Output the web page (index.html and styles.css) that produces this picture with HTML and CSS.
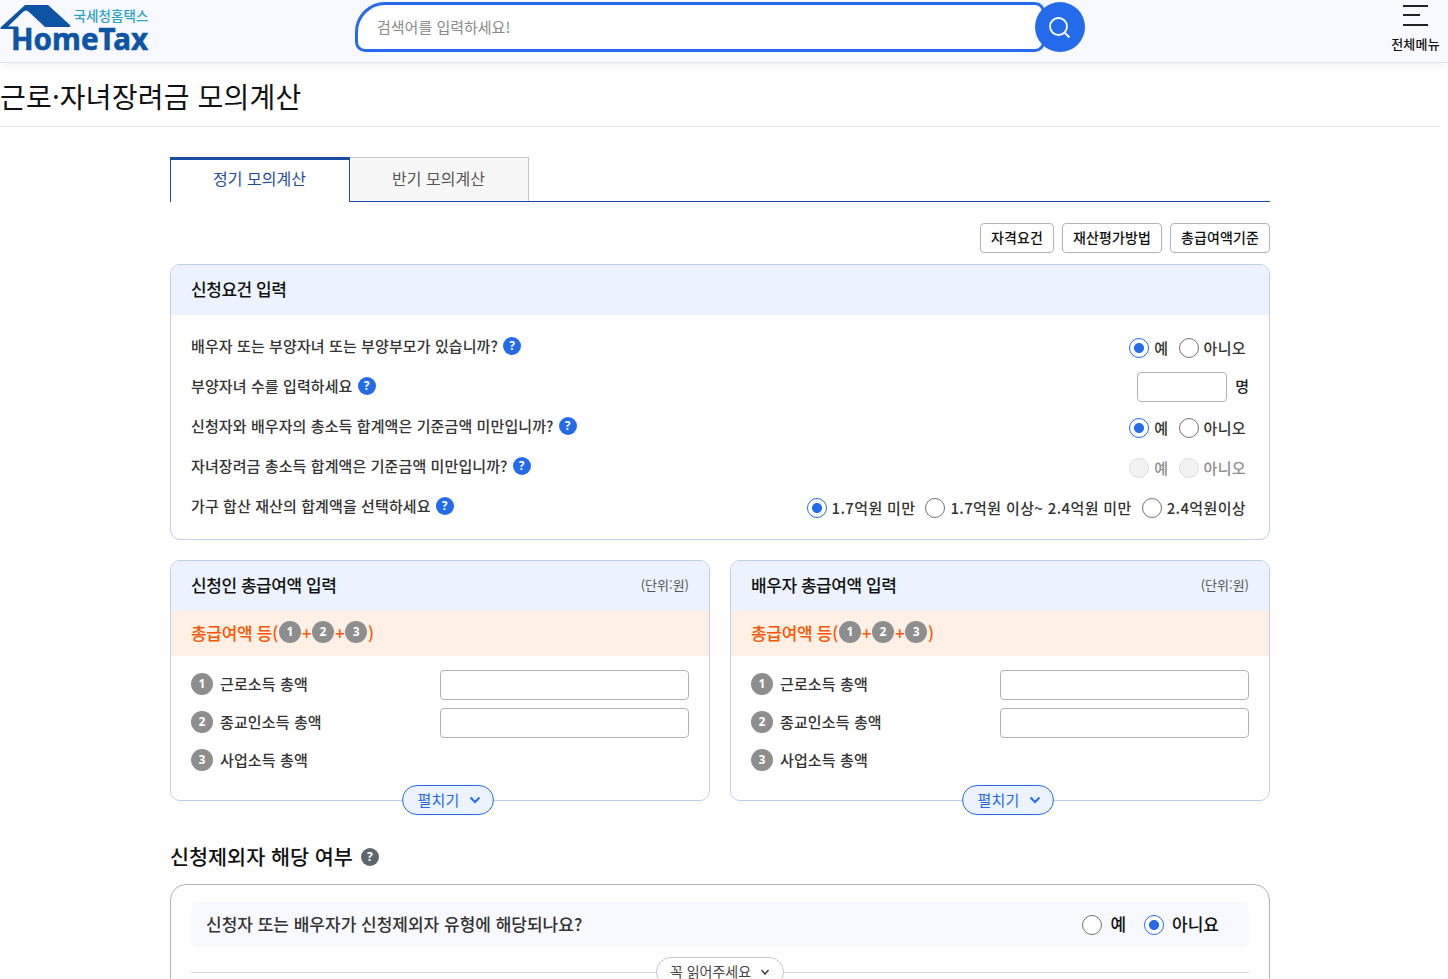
FILE: index.html
```html
<!DOCTYPE html>
<html lang="ko">
<head>
	<meta charset="UTF-8">
	<title>근로·자녀장려금 모의계산</title>
	<link rel="stylesheet" href="styles.css">
</head>
<body>
<header class="header">
	<a class="logo" href="#">
		<svg width="150" height="60" viewBox="0 0 150 60">
			<path d="M25 5H48L70 25Q71 27 69 27H45L29 12Q26 9 23 12L8 26.500H18V29H2Q-1 29 1 27Z" fill="#0d54a5"/>
			<text class="logo-ko" x="73.500" y="20.500" textLength="75">국세청홈택스</text>
			<text class="logo-en" x="11" y="50" textLength="137" lengthAdjust="spacingAndGlyphs">HomeTax</text>
		</svg>
	</a>
	<form class="search">
		<input class="search-input" type="text" placeholder="검색어를 입력하세요!">
		<button class="search-btn" type="button">
			<svg width="24" height="24" viewBox="0 0 24 24" fill="none" stroke="#fff" stroke-width="1.8"><circle cx="10.500" cy="10.500" r="8.500"/><path d="M16.500 16.500L21.500 21.500"/></svg>
		</button>
	</form>
	<a class="all-menu" href="#">
		<svg width="25" height="22" viewBox="0 0 25 22" fill="none" stroke="#222" stroke-width="2"><path d="M0 1H25M0 10H17M0 20H25"/></svg>
		<span>전체메뉴</span>
	</a>
</header>

<h1 class="page-title">근로·자녀장려금 모의계산</h1>

<main class="content">
	<ul class="tabs">
		<li class="tab on">정기 모의계산</li>
		<li class="tab">반기 모의계산</li>
	</ul>

	<div class="guide">
		<button type="button">자격요건</button>
		<button type="button">재산평가방법</button>
		<button type="button">총급여액기준</button>
	</div>

	<section class="card">
		<div class="card-head"><h2>신청요건 입력</h2></div>
		<ul class="questions">
			<li>
				<span class="q">배우자 또는 부양자녀 또는 부양부모가 있습니까?</span><i class="help">?</i>
				<div class="answer">
					<label><input type="radio" name="q1" checked>예</label>
					<label><input type="radio" name="q1">아니오</label>
				</div>
			</li>
			<li>
				<span class="q">부양자녀 수를 입력하세요</span><i class="help">?</i>
				<div class="answer count"><input class="field" type="text"><span>명</span></div>
			</li>
			<li>
				<span class="q">신청자와 배우자의 총소득 합계액은 기준금액 미만입니까?</span><i class="help">?</i>
				<div class="answer">
					<label><input type="radio" name="q3" checked>예</label>
					<label><input type="radio" name="q3">아니오</label>
				</div>
			</li>
			<li>
				<span class="q">자녀장려금 총소득 합계액은 기준금액 미만입니까?</span><i class="help">?</i>
				<div class="answer disabled">
					<label><input type="radio" name="q4" disabled>예</label>
					<label><input type="radio" name="q4" disabled>아니오</label>
				</div>
			</li>
			<li>
				<span class="q">가구 합산 재산의 합계액을 선택하세요</span><i class="help">?</i>
				<div class="answer">
					<label><input type="radio" name="q5" checked>1.7억원 미만</label>
					<label><input type="radio" name="q5">1.7억원 이상~ 2.4억원 미만</label>
					<label><input type="radio" name="q5">2.4억원이상</label>
				</div>
			</li>
		</ul>
	</section>

	<div class="pay">
		<section class="card pay-card">
			<div class="card-head"><h2>신청인 총급여액 입력</h2><span class="unit">(단위:원)</span></div>
			<div class="total"><span>총급여액 등(</span><i class="num">1</i><span>+</span><i class="num">2</i><span>+</span><i class="num">3</i><span>)</span></div>
			<ul class="incomes">
				<li><i class="num">1</i><span>근로소득 총액</span><input class="field" type="text"></li>
				<li><i class="num">2</i><span>종교인소득 총액</span><input class="field" type="text"></li>
				<li><i class="num">3</i><span>사업소득 총액</span></li>
			</ul>
			<button class="more" type="button"><span>펼치기</span><svg width="12" height="8" viewBox="0 0 12 8" fill="none" stroke="#246beb" stroke-width="2"><path d="M1.500 1.500L6 6L10.500 1.500"/></svg></button>
		</section>
		<section class="card pay-card">
			<div class="card-head"><h2>배우자 총급여액 입력</h2><span class="unit">(단위:원)</span></div>
			<div class="total"><span>총급여액 등(</span><i class="num">1</i><span>+</span><i class="num">2</i><span>+</span><i class="num">3</i><span>)</span></div>
			<ul class="incomes">
				<li><i class="num">1</i><span>근로소득 총액</span><input class="field" type="text"></li>
				<li><i class="num">2</i><span>종교인소득 총액</span><input class="field" type="text"></li>
				<li><i class="num">3</i><span>사업소득 총액</span></li>
			</ul>
			<button class="more" type="button"><span>펼치기</span><svg width="12" height="8" viewBox="0 0 12 8" fill="none" stroke="#246beb" stroke-width="2"><path d="M1.500 1.500L6 6L10.500 1.500"/></svg></button>
		</section>
	</div>

	<h2 class="sub-title">신청제외자 해당 여부<i class="help dark">?</i></h2>
	<section class="except">
		<div class="except-q">
			<span>신청자 또는 배우자가 신청제외자 유형에 해당되나요?</span>
			<div class="except-a">
				<label><input type="radio" name="ex"><span>예</span></label>
				<label><input type="radio" name="ex" checked><span>아니요</span></label>
			</div>
		</div>
		<div class="read">
			<button type="button"><span>꼭 읽어주세요</span><svg width="10" height="7" viewBox="0 0 10 7" fill="none" stroke="#444" stroke-width="1.500"><path d="M1.500 1L5 5L8.500 1"/></svg></button>
		</div>
	</section>
</main>
</body>
</html>
```
FILE: styles.css
```css
* {
  box-sizing: border-box;
}

html, body {
  margin: 0;
  height: 979px;
  overflow: hidden;
}

body, button, input {
  font-family: "Noto Sans CJK KR", "Noto Sans", sans-serif;
}

body {
  color: #333;
  background: #fff;
  font-size: 15px;
  font-weight: 500;
}

h1, h2, ul {
  margin: 0;
  padding: 0;
  list-style: none;
  font-weight: 500;
}

i {
  font-style: normal;
}

a {
  color: inherit;
  text-decoration: none;
}

/* header */
.header {
  display: flex;
  height: 63px;
  background: #f8f9ff;
  border-bottom: 1px solid #e1e4ea;
  box-shadow: 0 2px 10px rgba(0, 0, 0, 0.06);
}
.logo {
  width: 355px;
}
.logo svg {
  display: block;
  overflow: visible;
}
.logo-ko {
  font-size: 13.5px;
  fill: #2ba3c4;
}
.logo-en {
  font-family: "Noto Sans", sans-serif;
  font-size: 30px;
  font-weight: 700;
  fill: #0d54a5;
  stroke: #0d54a5;
  stroke-width: 0.6px;
}
.search {
  display: flex;
  width: 730px;
  padding-top: 2px;
}
.search-input {
  width: 690px;
  height: 50px;
  padding: 0 19px 2px;
  border: 3px solid #246beb;
  border-radius: 30px 10px 10px 10px;
  background: #fff;
  font-size: 15px;
}
.search-input::placeholder {
  color: #8a8a8a;
}
.search-btn {
  flex: none;
  width: 50px;
  height: 50px;
  margin-left: -10px;
  padding: 5px 0 0;
  border: 0;
  border-radius: 50%;
  background: #246beb;
}
.all-menu {
  display: flex;
  flex-direction: column;
  align-items: flex-end;
  width: 363px;
  padding: 5px 8px 0 0;
  color: #111;
  font-size: 13px;
  letter-spacing: 0.25px;
  line-height: 18px;
}
.all-menu svg {
  margin: 0 12px 8px 0;
}

.page-title {
  width: 1440px;
  height: 64px;
  border-bottom: 1px solid #e4e5ea;
  color: #111;
  font-size: 28px;
  font-weight: 400;
  letter-spacing: 0.18px;
  line-height: 67px;
}

.content {
  width: 1100px;
  margin: 30px 0 0 170px;
}

/* tabs */
.tabs {
  display: flex;
  height: 45px;
  border-bottom: 1px solid #1d4ba3;
}
.tab {
  width: 179px;
  height: 44px;
  padding-right: 1px;
  border: 1px solid #c6c6c6;
  border-width: 1px 1px 0 0;
  background: #f7f7f7;
  color: #555;
  font-size: 16px;
  font-weight: 400;
  line-height: 40px;
  text-align: center;
}
.tab.on {
  width: 180px;
  height: 45px;
  border: 1px solid #1d4ba3;
  border-top-width: 3px;
  border-bottom: 0;
  background: #fff;
  color: #1d4ba3;
  line-height: 36px;
}

.guide {
  display: flex;
  justify-content: flex-end;
  gap: 8px;
  margin: 21px 0 11px;
}
.guide button {
  height: 30px;
  padding: 0 10px 2px;
  border: 1px solid #b1b4b8;
  border-radius: 4px;
  background: #fff;
  color: #111;
  font-size: 14px;
  font-weight: 500;
  letter-spacing: 0.12px;
}

/* cards */
.card {
  border: 1px solid #bdcdea;
  border-radius: 10px;
}
.card-head {
  display: flex;
  justify-content: space-between;
  align-items: center;
  height: 50px;
  padding: 0 20px 3px;
  border-radius: 9px 9px 0 0;
  background: #ecf2fe;
}
.card-head h2 {
  color: #111;
  font-size: 17px;
  letter-spacing: -0.45px;
}
.unit {
  color: #555;
  font-size: 13px;
  font-weight: 400;
}
.questions {
  height: 224px;
  padding: 11px 20px 0;
}
.questions li {
  display: flex;
  align-items: center;
  height: 40px;
}
.q {
  letter-spacing: 0.1px;
  line-height: 22px;
}
.help {
  width: 18px;
  height: 18px;
  margin-left: 5px;
  border-radius: 50%;
  background: #246beb;
  color: #fff;
  font-family: "Noto Sans", sans-serif;
  font-size: 12px;
  font-weight: 700;
  line-height: 18px;
  text-align: center;
}
.answer {
  display: flex;
  gap: 10px;
  margin: 4px 3px 0 auto;
  letter-spacing: 0.36px;
}
.answer.count {
  align-items: center;
  gap: 8px;
  margin: 2px 0 0 auto;
  color: #222;
  letter-spacing: 0;
}
.count span {
  padding-bottom: 3px;
}
.answer.disabled {
  color: #8e8e8e;
}
label {
  display: flex;
  align-items: center;
  gap: 5px;
  line-height: 20px;
}
input[type="radio"] {
  appearance: none;
  width: 20px;
  height: 20px;
  margin: 0;
  border: 1px solid #717171;
  border-radius: 50%;
  background: #fff;
}
input[type="radio"]:checked {
  border-color: #246beb;
  background: radial-gradient(circle, #246beb 4.6px, #fff 5.4px);
}
input[type="radio"]:disabled {
  border-color: #dcdcdc;
  background: #f2f2f2;
}
.field {
  width: 90px;
  height: 30px;
  border: 1px solid #b1b1b1;
  border-radius: 4px;
  background: #fff;
}

.pay {
  display: flex;
  gap: 20px;
  margin-top: 20px;
}
.pay-card {
  position: relative;
  width: 540px;
  height: 241px;
}
.total {
  display: flex;
  align-items: center;
  height: 45px;
  padding: 0 20px;
  background: #fef0e5;
  color: #ff5500;
  font-size: 17px;
  letter-spacing: -0.3px;
}
.total span {
  padding-bottom: 2px;
}
.num {
  flex: none;
  width: 22px;
  height: 22px;
  border-radius: 50%;
  background: #8e8e8e;
  color: #fff;
  font-family: "Noto Sans", sans-serif;
  font-size: 12px;
  font-weight: 700;
  letter-spacing: 0;
  line-height: 21px;
  text-align: center;
}
.total .num {
  margin: 0 0.9px 3px;
}
.incomes {
  padding: 9px 20px 0;
}
.incomes li {
  display: flex;
  align-items: center;
  height: 38px;
}
.incomes span {
  margin-left: 7px;
  padding-bottom: 2px;
  letter-spacing: 0.12px;
}
.incomes .field {
  width: 249px;
  margin: 0 0 -1px auto;
}
.more {
  display: flex;
  justify-content: center;
  align-items: center;
  gap: 9px;
  position: absolute;
  left: 231px;
  bottom: -15px;
  width: 92px;
  height: 30px;
  padding: 0 0 0 2px;
  border: 1px solid #246beb;
  border-radius: 15px;
  background: #ecf2fe;
  color: #246beb;
  font-size: 15px;
  letter-spacing: 0.2px;
}
.more span, .read span {
  padding-bottom: 2px;
}

/* exclusion check */
.sub-title {
  display: flex;
  align-items: center;
  height: 30px;
  margin: 40px 0 13px;
  color: #111;
  font-size: 20.7px;
}
.help.dark {
  margin: 2px 0 0 8px;
  background: #5f666d;
}
.except {
  height: 300px;
  padding: 17px 20px;
  border: 1px solid #b1b4b8;
  border-radius: 16px;
}
.except-q {
  display: flex;
  justify-content: space-between;
  align-items: center;
  height: 45px;
  padding: 0 30px 0 15px;
  border-radius: 7px;
  background: #f8f9ff;
  font-size: 17px;
}
.except-q span {
  padding-bottom: 2px;
}
.except-a {
  display: flex;
  gap: 18px;
  color: #111;
}
.except-a label {
  gap: 8px;
}
.read {
  display: flex;
  align-items: center;
  height: 30px;
  margin-top: 10px;
}
.read::before, .read::after {
  content: "";
  flex: 1;
  height: 1px;
  background: #d8d8d8;
}
.read button {
  display: flex;
  justify-content: center;
  align-items: center;
  gap: 9px;
  width: 128px;
  height: 30px;
  padding: 0;
  border: 1px solid #c6c6c6;
  border-radius: 15px;
  background: #fff;
  color: #444;
  font-size: 14px;
}
```
